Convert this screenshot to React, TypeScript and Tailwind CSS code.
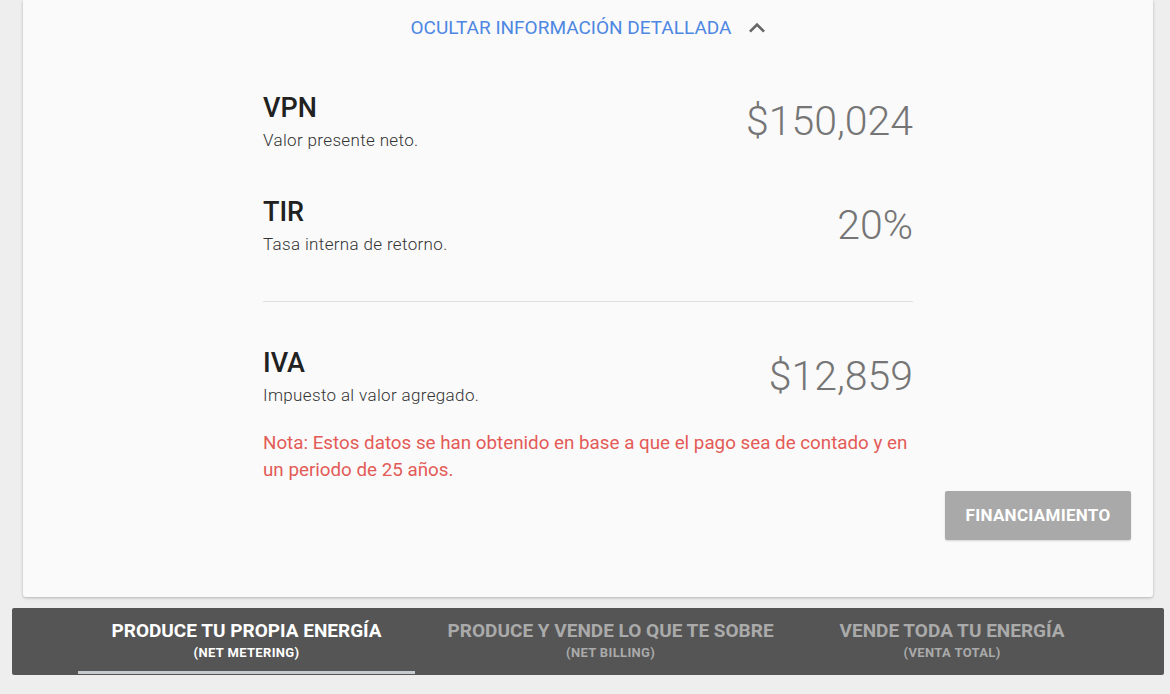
import React from 'react'

const METRICS = [
  { id: 'vpn', title: 'VPN', subtitle: 'Valor presente neto.', value: '$150,024' },
  { id: 'tir', title: 'TIR', subtitle: 'Tasa interna de retorno.', value: '20%' },
]

const TABS = [
  { id: 'metering', title: 'PRODUCE TU PROPIA ENERGÍA', sub: '(NET METERING)' },
  { id: 'billing', title: 'PRODUCE Y VENDE LO QUE TE SOBRE', sub: '(NET BILLING)' },
  { id: 'total', title: 'VENDE TODA TU ENERGÍA', sub: '(VENTA TOTAL)' },
]

function MetricRow({ title, subtitle, value }: { title: string; subtitle: string; value: string }) {
  return (
    <div className="flex items-center justify-between">
      <div className="flex flex-col">
        <span className="text-[27px] leading-8 font-medium text-[#212121]">{title}</span>
        <span className="mt-[6px] text-[17px] leading-5 font-light tracking-[0.35px] text-[#333333]">{subtitle}</span>
      </div>
      <span className="text-[41px] leading-[48px] font-light text-[#757575]">{value}</span>
    </div>
  )
}

export default function App() {
  const activeTab = 'metering'

  return (
    <div
      className="w-[1170px] h-[694px] overflow-hidden bg-[#eeeeee] flex flex-col"
      style={{ fontFamily: 'Roboto, "Liberation Sans", sans-serif' }}
    >
      {/* Detail card */}
      <div className="ml-[23px] mr-[17px] h-[597px] shrink-0 bg-[#fafafa] rounded-b-[3px] shadow-[0_1px_3px_rgba(0,0,0,0.25)] flex flex-col">
        <button className="mt-[17px] h-[22px] self-center flex items-center gap-[10px] text-[19px] leading-[22px] text-[#4d87e2]">
          OCULTAR INFORMACIÓN DETALLADA
          <svg width="32" height="32" viewBox="0 0 24 24" className="-my-[5px] -mr-[8px]">
            <path d="M7.41 15.41 12 10.83l4.59 4.58L18 14l-6-6-6 6z" fill="#666666" />
          </svg>
        </button>

        <div className="w-[650px] mx-auto mt-[53px] flex flex-col">
          <div className="flex flex-col gap-[46px]">
            {METRICS.map(m => (
              <MetricRow key={m.id} {...m} />
            ))}
          </div>

          <div className="mt-[47px] h-px bg-[#e0e0e0]" />

          <div className="mt-[45px]">
            <MetricRow title="IVA" subtitle="Impuesto al valor agregado." value="$12,859" />
          </div>

          <p className="mt-[25px] text-[18.8px] leading-[27px] text-[#e35a57]">
            Nota: Estos datos se han obtenido en base a que el pago sea de contado y en un periodo de 25 años.
          </p>
        </div>

        <div className="mt-[7px] flex justify-end pr-[22px]">
          <button className="w-[186px] h-[49px] rounded-[2px] bg-[#a9a9a9] text-white text-[17px] font-bold tracking-[0.3px] shadow-[0_1px_2px_rgba(0,0,0,0.15)]">
            FINANCIAMIENTO
          </button>
        </div>
      </div>

      {/* Tab bar */}
      <div className="ml-[12px] mr-[6px] mt-[11px] h-[67px] shrink-0 bg-[#555555] rounded-[2px] flex justify-center">
        {TABS.map(tab => {
          const isActive = tab.id === activeTab
          return (
            <div key={tab.id} className="flex flex-col items-stretch">
              <div className="flex-1 px-[33px] pt-[12px] flex flex-col items-center">
                <span
                  className={`text-[19px] leading-[22px] font-bold ${isActive ? 'text-white' : 'text-[#aaaaaa]'}`}
                >
                  {tab.title}
                </span>
                <span
                  className={`mt-[3px] text-[13px] leading-4 font-bold tracking-[0.35px] ${isActive ? 'text-white' : 'text-[#aaaaaa]'}`}
                >
                  {tab.sub}
                </span>
              </div>
              <div className={`h-[3px] mb-[1px] ${isActive ? 'bg-[#c3cbd0]' : 'bg-transparent'}`} />
            </div>
          )
        })}
      </div>
    </div>
  )
}
